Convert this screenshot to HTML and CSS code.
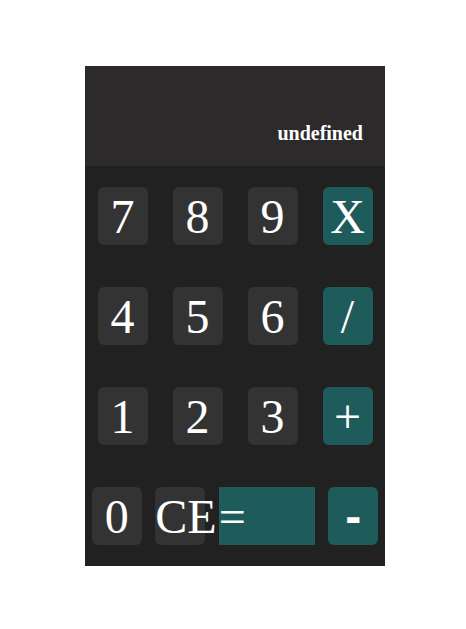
FILE: index.html
```html
<!DOCTYPE html>
<html>
<head>
<meta charset="utf-8">
<link rel="stylesheet" href="styles.css">
</head>
<body>
<div class="calc">
  <div class="display"><span class="result">undefined</span></div>
  <div class="row">
    <button class="key">7</button>
    <button class="key">8</button>
    <button class="key">9</button>
    <button class="key op">X</button>
  </div>
  <div class="row">
    <button class="key">4</button>
    <button class="key">5</button>
    <button class="key">6</button>
    <button class="key op">/</button>
  </div>
  <div class="row">
    <button class="key">1</button>
    <button class="key">2</button>
    <button class="key">3</button>
    <button class="key op">+</button>
  </div>
  <div class="row">
    <button class="key">0</button>
    <button class="key">CE</button>
    <button class="key equals">=</button>
    <button class="key op minus">-</button>
  </div>
</div>
</body>
</html>
```
FILE: styles.css
```css
html, body {
  margin: 0;
  padding: 0;
  background: #ffffff;
}

.calc {
  width: 300px;
  margin: 66px 0 0 85px;
  background: #212121;
  display: flex;
  flex-direction: column;
}

.display {
  height: 100px;
  box-sizing: border-box;
  background: #2c2a2b;
  display: flex;
  justify-content: flex-end;
  align-items: flex-end;
  padding: 0 22px 21px 0;
}

.result {
  font-family: "Liberation Serif", serif;
  font-weight: bold;
  font-size: 20px;
  color: #ffffff;
}

.row {
  height: 100px;
  display: flex;
  justify-content: space-around;
  align-items: center;
}

.key {
  width: 50px;
  height: 58px;
  padding: 0;
  margin: 0;
  border: none;
  border-radius: 6px;
  background: #333333;
  color: #ffffff;
  font-family: "Liberation Serif", serif;
  font-size: 48px;
  line-height: normal;
  text-align: center;
  white-space: nowrap;
}

.op {
  background: #1e5c5c;
}

.equals {
  width: 96px;
  border-radius: 0;
  background: #1e5c5c;
  text-align: left;
  position: relative;
}

.minus {
  font-family: "Liberation Sans", sans-serif;
  font-weight: bold;
}
```
